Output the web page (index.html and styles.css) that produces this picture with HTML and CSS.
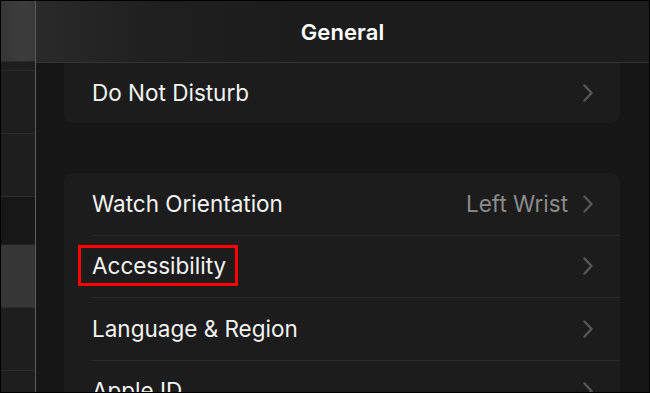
FILE: index.html
```html
<!DOCTYPE html>
<html lang="en">
<head>
<meta charset="utf-8">
<title>General</title>
<link rel="stylesheet" href="styles.css">
</head>
<body>
<div class="screen">
  <aside class="sidebar">
    <div class="side-head"></div>
    <div class="side-row side-top"></div>
    <div class="side-row"></div>
    <div class="side-row"></div>
    <div class="side-row side-dark"></div>
    <div class="side-row side-active"></div>
    <div class="side-row"></div>
    <div class="side-row side-last"></div>
  </aside>
  <main class="main">
    <header class="nav"><h1 class="nav-title">General</h1></header>
    <div class="content">
      <section class="card card-top">
        <div class="row">
          <div class="row-body">
            <span class="label">Do Not Disturb</span>
            <svg class="chev" width="10" height="18" viewBox="0 0 10 18"><polyline points="1.5,1.5 8.5,9 1.5,16.5" fill="none" stroke="#575757" stroke-width="2.4" stroke-linecap="round" stroke-linejoin="round"/></svg>
          </div>
        </div>
      </section>
      <section class="card card-main">
        <div class="row">
          <div class="row-body">
            <span class="label">Watch Orientation</span>
            <span class="value">Left Wrist</span>
            <svg class="chev" width="10" height="18" viewBox="0 0 10 18"><polyline points="1.5,1.5 8.5,9 1.5,16.5" fill="none" stroke="#575757" stroke-width="2.4" stroke-linecap="round" stroke-linejoin="round"/></svg>
          </div>
        </div>
        <div class="row">
          <div class="row-body">
            <span class="label highlight">Accessibility</span>
            <svg class="chev" width="10" height="18" viewBox="0 0 10 18"><polyline points="1.5,1.5 8.5,9 1.5,16.5" fill="none" stroke="#575757" stroke-width="2.4" stroke-linecap="round" stroke-linejoin="round"/></svg>
          </div>
        </div>
        <div class="row">
          <div class="row-body">
            <span class="label">Language &amp; Region</span>
            <svg class="chev" width="10" height="18" viewBox="0 0 10 18"><polyline points="1.5,1.5 8.5,9 1.5,16.5" fill="none" stroke="#575757" stroke-width="2.4" stroke-linecap="round" stroke-linejoin="round"/></svg>
          </div>
        </div>
        <div class="row">
          <div class="row-body">
            <span class="label">Apple ID</span>
            <svg class="chev" width="10" height="18" viewBox="0 0 10 18"><polyline points="1.5,1.5 8.5,9 1.5,16.5" fill="none" stroke="#575757" stroke-width="2.4" stroke-linecap="round" stroke-linejoin="round"/></svg>
          </div>
        </div>
      </section>
    </div>
  </main>
</div>
</body>
</html>
```
FILE: styles.css
```css
* { box-sizing: border-box; }
html, body { margin: 0; padding: 0; background: #000; }
body { font-family: Inter, "Noto Sans", "Liberation Sans", sans-serif; }

.screen {
  width: 650px;
  height: 393px;
  border: 1px solid #000;
  display: flex;
  overflow: hidden;
  background: #161616;
}

.sidebar {
  width: 35px;
  flex: none;
  border-right: 1px solid #5c5c5c;
  display: flex;
  flex-direction: column;
  background: #1e1e1e;
}
.side-head {
  height: 61px;
  background: linear-gradient(90deg, #353535, #3d3d3d 60%, #393939);
  border-bottom: 1px solid #2a2a2a;
  flex: none;
}
.side-row {
  height: 63px;
  flex: none;
  border-bottom: 1px solid #2b2b2b;
  background: #1e1e1e;
}
.side-top { height: 9px; }
.side-dark { height: 48px; background: #171717; border-bottom-color: #222; }
.side-active { height: 63px; background: #363636; border-bottom-color: #2c2c2c; }
.side-last { flex: 1; border-bottom: 0; }

.main {
  flex: 1;
  display: flex;
  flex-direction: column;
  min-width: 0;
}
.nav {
  height: 62px;
  flex: none;
  border-bottom: 1px solid #333;
  background: linear-gradient(90deg, #2a2a2a 0, #1f1f1f 120px, #1c1c1c 260px, #1c1c1c 100%);
  display: flex;
  align-items: center;
  justify-content: center;
}
.nav-title {
  margin: 0;
  color: #fff;
  font-size: 22px;
  font-weight: 600;
  letter-spacing: 0.1px;
}

.content {
  flex: 1;
  padding: 0 29px 0 28px;
  display: flex;
  flex-direction: column;
  gap: 50px;
}
.card {
  background: #1c1c1c;
  border-radius: 9px;
}
.card-top { border-radius: 0 0 9px 9px; }
.card-top .row-body { height: 60px; border-bottom: 0; }

.row {
  display: flex;
  padding-left: 28px;
}
.row-body {
  flex: 1;
  height: 62.5px;
  display: flex;
  align-items: center;
  padding-right: 27px;
  border-bottom: 1px solid #2a2a2a;
}
.label {
  color: #f4f4f4;
  font-size: 22.5px;
  line-height: 28px;
  flex: 1;
}
.value {
  color: #8b8b8b;
  font-size: 22.5px;
  line-height: 28px;
  margin-right: 15px;
}
.chev { flex: none; display: block; }

.highlight {
  position: relative;
  flex: none;
  margin-right: auto;
}
.highlight::after {
  content: "";
  position: absolute;
  left: -14px;
  right: -12px;
  top: -7px;
  bottom: -6px;
  border: 3px solid #ff0000;
}
```
